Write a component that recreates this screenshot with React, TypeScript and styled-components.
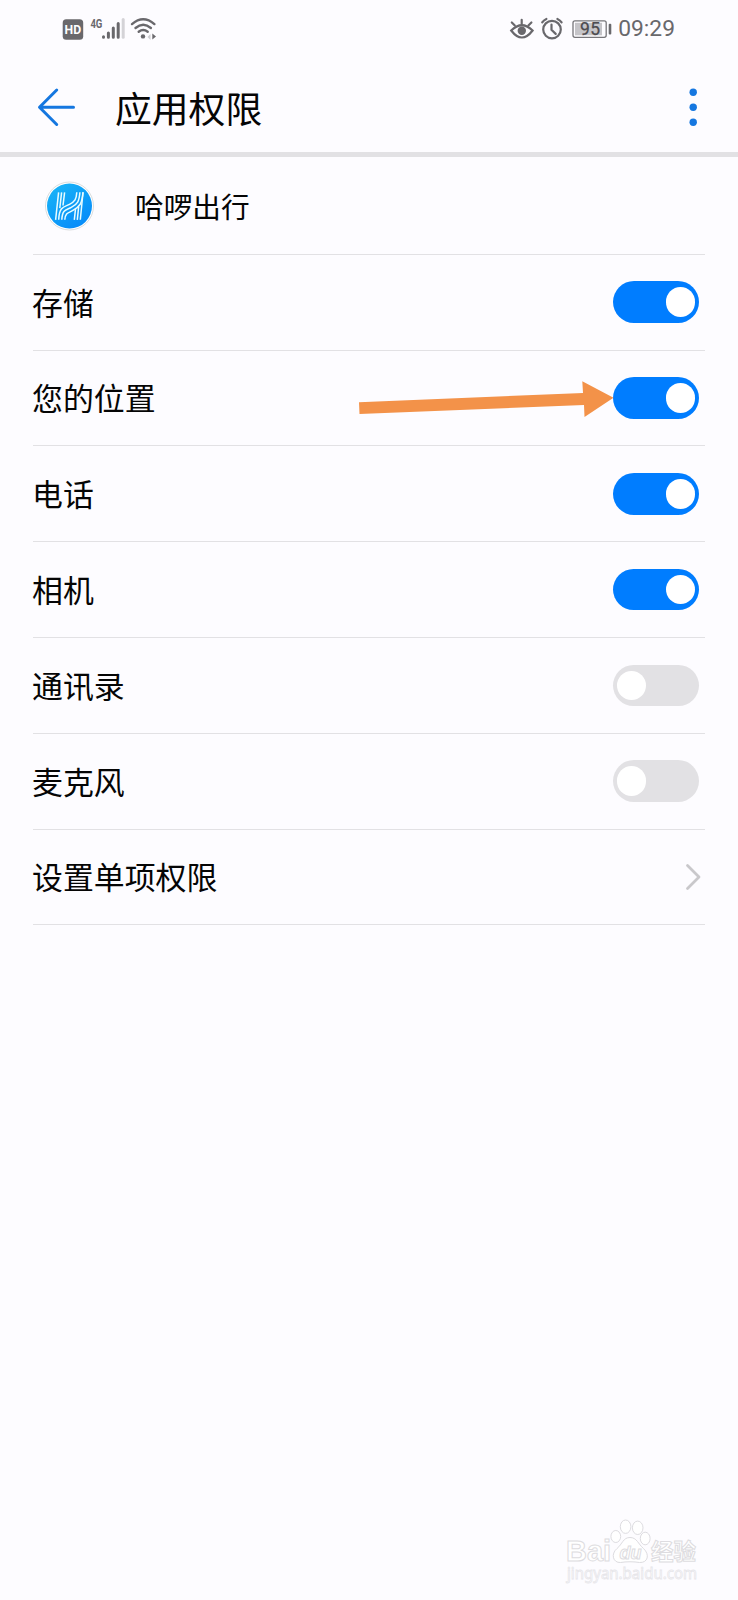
import React from "react";
import styled, { createGlobalStyle } from "styled-components";

const Global = createGlobalStyle`
  * { box-sizing: border-box; }
  html, body { margin: 0; background: #fdfcff; }
`;

const sans = `"Noto Sans CJK SC", sans-serif`;

const Screen = styled.main`
  position: relative;
  display: flex;
  flex-direction: column;
  width: 738px;
  height: 1600px;
  overflow: hidden;
  background: #fdfcff;
  color: #050505;
  font-family: ${sans};
`;

const StatusBar = styled.div`
  display: flex;
  justify-content: space-between;
  height: 58px;
  padding: 8px 63px 0 50px;
`;

const StatusGroup = styled.div`
  display: flex;
  height: 44px;
  align-items: center;
`;

const Clock = styled.time`
  margin: -2px 0 0 6px;
  color: #69686c;
  font: 400 22.8px/44px Roboto, sans-serif;
`;

const Header = styled.header`
  display: flex;
  align-items: center;
  height: 99px;
  padding: 3px 38px 0 37px;
  border-bottom: 5px solid #e2e1e4;
`;

const IconButton = styled.button`
  display: flex;
  padding: 0;
  border: 0;
  background: none;
`;

const Title = styled.h1`
  flex: 1;
  margin: 0 0 0 39px;
  font-size: 36.8px;
  line-height: 50px;
  font-weight: 400;
`;

const List = styled.section`
  display: flex;
  flex-direction: column;
  padding: 0 33px;
`;

const AppRow = styled.div`
  display: flex;
  align-items: center;
  height: 97.8px;
  padding: 1px 0 0 12px;
  border-bottom: 1.5px solid #e2e1e4;
`;

const AppName = styled.span`
  margin-left: 40px;
  font-size: 28.7px;
  line-height: 40px;
`;

const Row = styled.div`
  display: flex;
  align-items: center;
  justify-content: space-between;
  height: 95.8px;
  padding-right: 6px;
  border-bottom: 1.5px solid #e2e1e4;
`;

const Label = styled.span`
  margin-top: -1px;
  margin-left: -1px;
  font-size: 30.9px;
  line-height: 44px;
`;

const Toggle = styled.button<{ $on: boolean }>`
  display: flex;
  align-items: center;
  justify-content: ${(p) => (p.$on ? "flex-end" : "flex-start")};
  width: 86.5px;
  height: 41.5px;
  padding: 0 4px;
  border: 0;
  border-radius: 21px;
  background: ${(p) => (p.$on ? "#007dff" : "#e2e1e4")};
`;

const Knob = styled.span`
  width: 29.5px;
  height: 29.5px;
  border-radius: 50%;
  background: #fff;
`;

const Chevron = styled.svg`
  margin-right: -1.5px;
`;

const Pointer = styled.svg`
  position: absolute;
  left: 355px;
  top: 378px;
`;

const Watermark = styled.svg`
  position: absolute;
  left: 560px;
  top: 1514px;
`;

const permissions = [
  { name: "存储", on: true },
  { name: "您的位置", on: true },
  { name: "电话", on: true },
  { name: "相机", on: true },
  { name: "通讯录", on: false },
  { name: "麦克风", on: false },
];

const SignalIcons = () => (
  <svg width="120" height="44" viewBox="0 0 120 44">
    <rect x="12.7" y="11.2" width="20.5" height="20.5" rx="3.5" fill="#69686c" />
    <text x="14.6" y="26.4" fontFamily="Roboto, sans-serif" fontWeight="700" fontSize="13.5" fill="#fff" textLength="16.6" lengthAdjust="spacingAndGlyphs">HD</text>
    <text x="40.4" y="19.5" fontFamily="Roboto, sans-serif" fontWeight="700" fontSize="12.5" fill="#69686c" textLength="12" lengthAdjust="spacingAndGlyphs">4G</text>
    <g strokeWidth="3" strokeLinecap="round">
      <path d="M53.5 28.7v.6M58.4 25v4.3M63.3 20v9.3M68.2 15.5v13.8" stroke="#69686c" />
      <path d="M73.2 11.5v17.8" stroke="#d4d3d7" />
    </g>
    <g fill="none" stroke="#69686c" strokeWidth="2.4" strokeLinecap="round">
      <path d="M82 16.1q11.2-9.6 22.4 0" />
      <path d="M85.5 20q7.7-6.4 15.4 0" />
      <path d="M88.7 23.8q4.5-3.5 9 0" />
    </g>
    <circle cx="93" cy="28.4" r="2.2" fill="#69686c" />
    <path d="M100.5 26v6l-3-3z" fill="#cfced2" />
    <path d="M102.3 25.5v6l3.7-3z" fill="#69686c" />
  </svg>
);

const DeviceIcons = () => (
  <svg width="112" height="44" viewBox="0 0 112 44">
    <g fill="none" stroke="#69686c" strokeWidth="2.2" strokeLinecap="round">
      <path d="M11.2 22.5q10.7-10.5 21.4 0q-10.7 14-21.4 0z" />
      <path d="M11.8 14.5l3 3M21.7 11.8v4M31.4 14.5l-3 3" />
      <circle cx="52" cy="21.6" r="8.8" />
      <path d="M51.5 16.6v5.2l4.2 4.1M42.2 14.4q1.5-2.3 4.2-3.5M61.6 14.4q-1.5-2.3-4.2-3.5" />
    </g>
    <circle cx="21.8" cy="22.7" r="4.2" fill="#69686c" />
    <rect x="73" y="12.8" width="33.2" height="16.5" rx="2" fill="none" stroke="#77767a" strokeWidth="1.3" />
    <rect x="75" y="14.8" width="27" height="12.5" fill="#c5c4c8" />
    <rect x="108.7" y="15.8" width="2.6" height="10.8" rx="1" fill="#69686c" />
    <text x="80" y="27" fontFamily="Roboto, sans-serif" fontWeight="400" fontSize="17.5" fill="#4c4b50" stroke="#4c4b50" strokeWidth=".25" textLength="20">95</text>
  </svg>
);

const AppLogo = () => (
  <svg width="50" height="50" viewBox="0 0 50 50">
    <defs>
      <linearGradient id="brand" x1="0" y1="0" x2=".7" y2="1">
        <stop stopColor="#19b7f7" />
        <stop offset="1" stopColor="#078cf9" />
      </linearGradient>
    </defs>
    <circle cx="24.5" cy="25" r="24" fill="#fff" stroke="#dadddd" />
    <circle cx="24.5" cy="25" r="22.5" fill="url(#brand)" />
    <g fill="none" stroke="#e9fcff" strokeWidth="1.5">
      <path d="M13.6 11.3L10.6 38.8M16.6 11.3L14.8 27.2M19.6 11.3L18 24.5" />
      <path d="M13.7 38.8C14.2 24.5 20 26 24.5 23.4C30 20.5 31.3 18.5 31.8 11.3" />
      <path d="M16.8 38.8C17.3 27.5 22 29 26.3 26.4C32.5 23 34.2 20.5 34.9 11.3" />
      <path d="M19.8 38.8C20.4 31 24 32 28.3 29.2C34.7 25.5 37 23 38 11.3" />
      <path d="M38 11.3L35.3 38.8M32.3 38.8L33.7 25.5M29.3 38.8L30.5 28" />
    </g>
  </svg>
);

export default function App() {
  return (
    <Screen>
      <Global />
      <StatusBar>
        <StatusGroup><SignalIcons /></StatusGroup>
        <StatusGroup><DeviceIcons /><Clock>09:29</Clock></StatusGroup>
      </StatusBar>
      <Header>
        <IconButton aria-label="返回">
          <svg width="39" height="40" viewBox="-1 0 39 40" fill="none" stroke="#1577e0" strokeWidth="3" strokeLinecap="round" strokeLinejoin="round">
            <path d="M18.7 3L1.5 20.3L18.7 37.5M2 20.3H35.5" />
          </svg>
        </IconButton>
        <Title>应用权限</Title>
        <IconButton aria-label="更多">
          <svg width="14" height="40" viewBox="0 0 14 40" fill="#1577e0">
            <circle cx="7.2" cy="5.3" r="3.7" />
            <circle cx="7.2" cy="20.3" r="3.7" />
            <circle cx="7.2" cy="35.2" r="3.7" />
          </svg>
        </IconButton>
      </Header>
      <List>
        <AppRow><AppLogo /><AppName>哈啰出行</AppName></AppRow>
        {permissions.map(({ name, on }) => (
          <Row key={name}>
            <Label>{name}</Label>
            <Toggle $on={on} role="switch" aria-checked={on} aria-label={name}><Knob /></Toggle>
          </Row>
        ))}
        <Row>
          <Label>设置单项权限</Label>
          <Chevron width="19" height="30" viewBox="0 0 19 30" fill="none" stroke="#c9c8cb" strokeWidth="2.8" strokeLinecap="round" strokeLinejoin="round">
            <path d="M5.5 3.5L17 15L5.5 26.5" />
          </Chevron>
        </Row>
      </List>
      <Pointer width="262" height="42" viewBox="0 0 262 42" fill="#f39249">
        <path d="M4 24.2L228 15L227.3 3.3L258.5 19.7L229.5 39L229 27L4.5 36z" />
      </Pointer>
      <Watermark width="145" height="74" viewBox="0 0 145 74" fill="#fff" stroke="#dddce0" strokeWidth="1">
        <text x="6" y="47.3" fontFamily="Liberation Sans, sans-serif" fontWeight="700" fontSize="29" textLength="45" lengthAdjust="spacingAndGlyphs">Bai</text>
        <ellipse cx="55.8" cy="22.5" rx="4.9" ry="6" />
        <ellipse cx="65.6" cy="12.7" rx="5.3" ry="6.7" />
        <ellipse cx="77.7" cy="13.8" rx="5.3" ry="6.7" />
        <ellipse cx="85.2" cy="24.5" rx="4.9" ry="6.3" />
        <path d="M70 23.5C63 23.5 62.5 30 57 34.5C50.5 40 53 49 60.5 48.5C66 47.5 74 47.5 79.5 48.5C88 49 90 40.5 83.5 34.5C78 30 77 23.5 70 23.5z" />
        <text x="59.5" y="44.5" fontFamily="Liberation Sans, sans-serif" fontWeight="700" fontStyle="italic" fontSize="18" textLength="22">du</text>
        <text x="91" y="46" fontFamily="Noto Sans CJK SC, sans-serif" fontWeight="700" fontSize="22.5" textLength="45">经验</text>
        <text x="7" y="65" fontFamily="Noto Sans, sans-serif" fontSize="15.5" strokeWidth=".8" stroke="#e7e6ea" textLength="130" lengthAdjust="spacingAndGlyphs">jingyan.baidu.com</text>
      </Watermark>
    </Screen>
  );
}
